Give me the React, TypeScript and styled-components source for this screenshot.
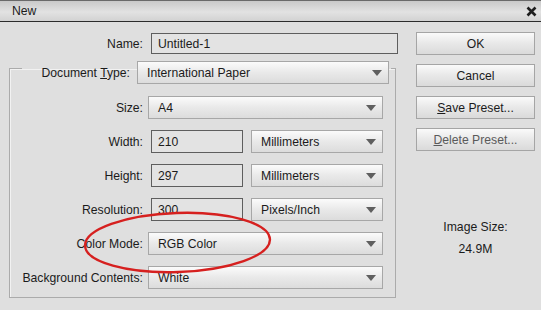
import { createGlobalStyle, styled } from "styled-components";

const GlobalStyle = createGlobalStyle`
  html, body {
    margin: 0;
    padding: 0;
    background: #dfdfdf;
  }
  body {
    font-family: "Liberation Sans", Arial, sans-serif;
    font-size: 12.2px;
    color: #1b1b1b;
  }
`;

const Window = styled.div`
  position: relative;
  width: 541px;
  height: 310px;
  overflow: hidden;
  background: #dfdfdf;
`;

const TitleBar = styled.div`
  height: 20px;
  display: flex;
  align-items: center;
  justify-content: space-between;
  padding: 0 4px 0 12px;
  border-top: 1px solid #6a6a6a;
  border-bottom: 1px solid #2c2c2c;
  background: linear-gradient(#c9c9c9, #e2e2e2 55%, #d2d2d2);
`;

const CloseIcon = () => (
  <svg width="11" height="11" viewBox="0 0 11 11">
    <path d="M1.5 1.5 L9.5 9.5 M9.5 1.5 L1.5 9.5" stroke="#1e1e1e" strokeWidth="2.6" />
  </svg>
);

const Body = styled.div`
  display: flex;
  padding-top: 10px;
`;

const LeftCol = styled.div`
  width: 400px;
`;

const RightCol = styled.div`
  margin-left: 16px;
  width: 119px;
  display: flex;
  flex-direction: column;
  gap: 9px;
`;

const Row = styled.div`
  display: flex;
  align-items: center;
  height: 23px;
`;

const Label = styled.div<{ $width: number }>`
  width: ${(p) => p.$width}px;
  text-align: right;
  white-space: nowrap;
  flex: none;
`;

const TextInput = styled.div<{ $width: number; $height?: number }>`
  margin-left: 8px;
  width: ${(p) => p.$width}px;
  height: ${(p) => p.$height ?? 21}px;
  box-sizing: border-box;
  border: 1px solid #5e5e5e;
  background: #e3e3e3;
  padding-left: 6px;
  display: flex;
  align-items: center;
`;

const Select = styled.div<{ $width: number; $gap?: number }>`
  margin-left: ${(p) => p.$gap ?? 5}px;
  width: ${(p) => p.$width}px;
  height: 23px;
  box-sizing: border-box;
  border: 1px solid #a7a7a7;
  background: linear-gradient(#fbfbfb, #e9e9e9 50%, #dcdcdc);
  padding: 0 6px 0 9px;
  display: flex;
  align-items: center;
  justify-content: space-between;
  white-space: nowrap;
`;

const Arrow = styled.span`
  width: 0;
  height: 0;
  border-left: 5px solid transparent;
  border-right: 5px solid transparent;
  border-top: 6px solid #5f5f5f;
`;

const Group = styled.fieldset`
  margin: -3px 0 0 9px;
  width: 387px;
  box-sizing: border-box;
  border: 1px solid #ababab;
  box-shadow: inset 1px 1px 0 #f2f2f2;
  padding: 12px 0 8px 0;
  display: flex;
  flex-direction: column;
  gap: 11px;
`;

const Legend = styled.legend`
  margin-left: 12px;
  padding: 9px 2px 0 0;
  display: flex;
  align-items: center;
`;

const Button = styled.div<{ $disabled?: boolean }>`
  height: 23px;
  box-sizing: border-box;
  border: 1px solid #a5a5a5;
  background: linear-gradient(#fafafa, #e8e8e8 50%, #dadada);
  display: flex;
  align-items: center;
  justify-content: center;
  color: ${(p) => (p.$disabled ? "#5a5a5a" : "#1b1b1b")};
`;

const Info = styled.div`
  margin-top: 56px;
  text-align: center;
  line-height: 22px;
`;

const Annotation = styled.svg`
  position: absolute;
  left: 0;
  top: 0;
  pointer-events: none;
`;

const fields = [
  { label: "Size:", kind: "select", value: "A4" },
  { label: "Width:", kind: "pair", value: "210", unit: "Millimeters" },
  { label: "Height:", kind: "pair", value: "297", unit: "Millimeters" },
  { label: "Resolution:", kind: "pair", value: "300", unit: "Pixels/Inch" },
  { label: "Color Mode:", kind: "select", value: "RGB Color" },
  { label: "Background Contents:", kind: "select", value: "White" },
];

const App = () => {
  return (
    <Window>
      <GlobalStyle />
      <TitleBar>
        <span>New</span>
        <CloseIcon />
      </TitleBar>
      <Body>
        <LeftCol>
          <Row>
            <Label $width={143}>Name:</Label>
            <TextInput $width={247}>Untitled-1</TextInput>
          </Row>
          <Group>
            <Legend>
              <Label $width={108}>
                Document <u>T</u>ype:
              </Label>
              <Select $width={252} $gap={7}>
                International Paper
                <Arrow />
              </Select>
            </Legend>
            {fields.map((f) => (
              <Row key={f.label}>
                <Label $width={133}>{f.label}</Label>
                {f.kind === "select" ? (
                  <Select $width={235}>
                    {f.value}
                    <Arrow />
                  </Select>
                ) : (
                  <>
                    <TextInput $width={92} $height={23}>
                      {f.value}
                    </TextInput>
                    <Select $width={132} $gap={8}>
                      {f.unit}
                      <Arrow />
                    </Select>
                  </>
                )}
              </Row>
            ))}
          </Group>
        </LeftCol>
        <RightCol>
          <Button>OK</Button>
          <Button>Cancel</Button>
          <Button>
            <span>
              <u>S</u>ave Preset...
            </span>
          </Button>
          <Button $disabled>
            <span>
              <u>D</u>elete Preset...
            </span>
          </Button>
          <Info>
            Image Size:
            <br />
            24.9M
          </Info>
        </RightCol>
      </Body>
      <Annotation width={541} height={310}>
        <ellipse
          cx={177.5}
          cy={242.5}
          rx={92.5}
          ry={29.5}
          transform="rotate(-2 177.5 242.5)"
          fill="none"
          stroke="#d6201f"
          strokeWidth={2.4}
        />
      </Annotation>
    </Window>
  );
};

export default App;
